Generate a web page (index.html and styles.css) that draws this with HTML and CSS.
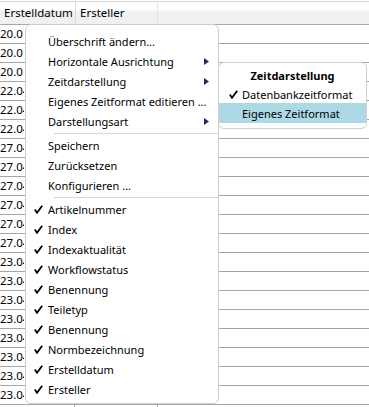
FILE: index.html
```html
<!DOCTYPE html>
<html>
	<head>
		<meta charset="UTF-8">
		<title>Spalten</title>
		<link rel="stylesheet" href="styles.css">
	</head>
	<body>
		<div class="grid">
			<div class="head">
				<div class="hcell c1">Erstelldatum</div>
				<div class="hcell c2">Ersteller</div>
				<div class="hcell rest"></div>
			</div>
			<div class="row"><div class="cell c1"><span class="date">20.01</span></div><div class="cell c2"></div><div class="cell rest"></div></div>
			<div class="row"><div class="cell c1"><span class="date">20.01</span></div><div class="cell c2"></div><div class="cell rest"></div></div>
			<div class="row"><div class="cell c1"><span class="date">20.01</span></div><div class="cell c2"></div><div class="cell rest"></div></div>
			<div class="row"><div class="cell c1"><span class="date">22.04</span></div><div class="cell c2"></div><div class="cell rest"></div></div>
			<div class="row"><div class="cell c1"><span class="date">22.04</span></div><div class="cell c2"></div><div class="cell rest"></div></div>
			<div class="row"><div class="cell c1"><span class="date">22.04</span></div><div class="cell c2"></div><div class="cell rest"></div></div>
			<div class="row"><div class="cell c1"><span class="date">27.04</span></div><div class="cell c2"></div><div class="cell rest"></div></div>
			<div class="row"><div class="cell c1"><span class="date">27.04</span></div><div class="cell c2"></div><div class="cell rest"></div></div>
			<div class="row"><div class="cell c1"><span class="date">27.04</span></div><div class="cell c2"></div><div class="cell rest"></div></div>
			<div class="row"><div class="cell c1"><span class="date">27.04</span></div><div class="cell c2"></div><div class="cell rest"></div></div>
			<div class="row"><div class="cell c1"><span class="date">27.04</span></div><div class="cell c2"></div><div class="cell rest"></div></div>
			<div class="row"><div class="cell c1"><span class="date">27.04</span></div><div class="cell c2"></div><div class="cell rest"></div></div>
			<div class="row"><div class="cell c1"><span class="date">23.04</span></div><div class="cell c2"></div><div class="cell rest"></div></div>
			<div class="row"><div class="cell c1"><span class="date">23.04</span></div><div class="cell c2"></div><div class="cell rest"></div></div>
			<div class="row"><div class="cell c1"><span class="date">23.04</span></div><div class="cell c2"></div><div class="cell rest"></div></div>
			<div class="row"><div class="cell c1"><span class="date">23.04</span></div><div class="cell c2"></div><div class="cell rest"></div></div>
			<div class="row"><div class="cell c1"><span class="date">23.04</span></div><div class="cell c2"></div><div class="cell rest"></div></div>
			<div class="row"><div class="cell c1"><span class="date">23.04</span></div><div class="cell c2"></div><div class="cell rest"></div></div>
			<div class="row"><div class="cell c1"><span class="date">23.04</span></div><div class="cell c2"></div><div class="cell rest"></div></div>
			<div class="row"><div class="cell c1"><span class="date">23.04</span></div><div class="cell c2"></div><div class="cell rest"></div></div>
			<div class="row"><div class="cell c1"></div><div class="cell c2"></div><div class="cell rest"></div></div>
		</div>

		<!-- Kontextmenü des Spaltenkopfs -->
		<div class="menu">
			<div class="item"><span class="mark"></span><span class="label">Überschrift ändern...</span></div>
			<div class="item"><span class="mark"></span><span class="label">Horizontale Ausrichtung</span><svg class="arrow" width="5" height="7" viewBox="0 0 5 7"><polygon points="0,0 5,3.5 0,7"/></svg></div>
			<div class="item"><span class="mark"></span><span class="label">Zeitdarstellung</span><svg class="arrow" width="5" height="7" viewBox="0 0 5 7"><polygon points="0,0 5,3.5 0,7"/></svg></div>
			<div class="item"><span class="mark"></span><span class="label">Eigenes Zeitformat editieren ...</span></div>
			<div class="item"><span class="mark"></span><span class="label">Darstellungsart</span><svg class="arrow" width="5" height="7" viewBox="0 0 5 7"><polygon points="0,0 5,3.5 0,7"/></svg></div>
			<div class="sep"></div>
			<div class="item"><span class="mark"></span><span class="label">Speichern</span></div>
			<div class="item"><span class="mark"></span><span class="label">Zurücksetzen</span></div>
			<div class="item"><span class="mark"></span><span class="label">Konfigurieren ...</span></div>
			<div class="sep"></div>
			<div class="item"><span class="mark"><svg width="9" height="9" viewBox="0 0 9 9"><path d="M0.8 4.6 L3 7.8 L8.2 0.8"/></svg></span><span class="label">Artikelnummer</span></div>
			<div class="item"><span class="mark"><svg width="9" height="9" viewBox="0 0 9 9"><path d="M0.8 4.6 L3 7.8 L8.2 0.8"/></svg></span><span class="label">Index</span></div>
			<div class="item"><span class="mark"><svg width="9" height="9" viewBox="0 0 9 9"><path d="M0.8 4.6 L3 7.8 L8.2 0.8"/></svg></span><span class="label">Indexaktualität</span></div>
			<div class="item"><span class="mark"><svg width="9" height="9" viewBox="0 0 9 9"><path d="M0.8 4.6 L3 7.8 L8.2 0.8"/></svg></span><span class="label">Workflowstatus</span></div>
			<div class="item"><span class="mark"><svg width="9" height="9" viewBox="0 0 9 9"><path d="M0.8 4.6 L3 7.8 L8.2 0.8"/></svg></span><span class="label">Benennung</span></div>
			<div class="item"><span class="mark"><svg width="9" height="9" viewBox="0 0 9 9"><path d="M0.8 4.6 L3 7.8 L8.2 0.8"/></svg></span><span class="label">Teiletyp</span></div>
			<div class="item"><span class="mark"><svg width="9" height="9" viewBox="0 0 9 9"><path d="M0.8 4.6 L3 7.8 L8.2 0.8"/></svg></span><span class="label">Benennung</span></div>
			<div class="item"><span class="mark"><svg width="9" height="9" viewBox="0 0 9 9"><path d="M0.8 4.6 L3 7.8 L8.2 0.8"/></svg></span><span class="label">Normbezeichnung</span></div>
			<div class="item"><span class="mark"><svg width="9" height="9" viewBox="0 0 9 9"><path d="M0.8 4.6 L3 7.8 L8.2 0.8"/></svg></span><span class="label">Erstelldatum</span></div>
			<div class="item"><span class="mark"><svg width="9" height="9" viewBox="0 0 9 9"><path d="M0.8 4.6 L3 7.8 L8.2 0.8"/></svg></span><span class="label">Ersteller</span></div>
		</div>

		<!-- Untermenü Zeitdarstellung -->
		<div class="submenu">
			<div class="subtitle">Zeitdarstellung</div>
			<div class="subitem"><span class="mark"><svg width="9" height="9" viewBox="0 0 9 9"><path d="M0.8 4.6 L3 7.8 L8.2 0.8"/></svg></span><span class="label">Datenbankzeitformat</span></div>
			<div class="subitem active"><span class="mark"></span><span class="label">Eigenes Zeitformat</span></div>
		</div>
	</body>
</html>
```

FILE: styles.css
```css
* {
	margin: 0;
	padding: 0;
	box-sizing: border-box;
}
body {
	font-family: "Noto Sans", "Open Sans", sans-serif;
	font-size: 11px;
	color: #000;
	background: #fff;
	overflow: hidden;
}
.grid {
	padding-top: 1px;
}
.head {
	display: flex;
	height: 24px;
	border-top: 1px solid #d6d6d6;
	border-bottom: 1px solid #a9a9a9;
	background: linear-gradient(#fff 0%, #fff 36%, #f1f2f4 40%, #eff0f3 100%);
}
.hcell {
	line-height: 22px;
	padding-left: 4px;
	font-size: 11.5px;
	white-space: nowrap;
}
.row {
	display: flex;
	height: 19px;
	border-bottom: 1px solid #a5a5a5;
}
.cell {
	line-height: 18px;
	font-size: 11.5px;
	white-space: nowrap;
	overflow: hidden;
}
.date {
	display: block;
	width: 24px;
	overflow: hidden;
}
.c1 {
	width: 75px;
	border-right: 1px solid #a5a5a5;
}
.hcell.c1 {
	width: 76px;
	border-right: 1px solid #d9d9d9;
}
.c2 {
	width: 83px;
	border-right: 1px solid #a5a5a5;
}
.hcell.c2 {
	width: 82px;
	border-right: 1px solid #e4e4e4;
}
.rest {
	flex: 1;
}
.hcell.rest {
	border: none;
}

.menu {
	position: absolute;
	left: 25px;
	top: 24px;
	width: 194px;
	height: 380px;
	padding-top: 6px;
	background: #fff;
	border: 1px solid #cdcdcd;
	border-radius: 6px;
}
.item {
	display: flex;
	align-items: center;
	height: 20px;
	white-space: nowrap;
}
.mark {
	display: flex;
	align-items: center;
	width: 22px;
	height: 20px;
	padding-left: 8px;
	flex: none;
}
.mark svg path {
	fill: none;
	stroke: #000;
	stroke-width: 1.8;
}
.label {
	flex: 1;
}
.arrow {
	margin-right: 9px;
	fill: #1f2b5c;
}
.sep {
	height: 1px;
	margin: 2px 0 1px 28px;
	background: #d6d6d6;
}

.submenu {
	position: absolute;
	left: 218px;
	top: 62px;
	width: 149px;
	height: 67px;
	padding: 3px 0 5px;
	background: #fff;
	border: 1px solid #d0d0d0;
	border-radius: 6px;
	overflow: hidden;
}
.subtitle {
	height: 19px;
	line-height: 19px;
	text-align: center;
	font-weight: bold;
}
.subitem {
	display: flex;
	align-items: center;
	height: 19px;
	white-space: nowrap;
}
.subitem .mark {
	width: 23px;
	height: 19px;
	padding-left: 10px;
}
.subitem.active {
	height: 20px;
	margin-top: -1px;
	padding-top: 1px;
	background: #add8e6;
}
```
